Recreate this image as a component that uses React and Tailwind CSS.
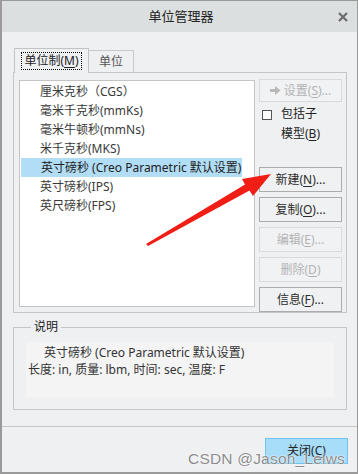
import React from "react";

const F = { fontFamily: '"Noto Sans", "Noto Sans CJK SC", sans-serif' };

function U({ children }) {
  return <span className="underline underline-offset-2 decoration-1">{children}</span>;
}

function Btn({ children, disabled, className = "" }) {
  return (
    <div
      className={
        "h-[25px] w-[83px] flex items-center justify-center border text-[12px] " +
        (disabled
          ? "border-[#dadada] text-[#b3b3b3] bg-[#f1f2f3] "
          : "border-[#acacac] text-[#2b2b2b] bg-[#f0f1f2] ") +
        className
      }
    >
      {children}
    </div>
  );
}

function RowArrow({ color }) {
  return (
    <svg width="11" height="11" viewBox="0 0 11 11">
      <path d="M0 4 H5 V1 L10.5 5.5 L5 10 V7 H0 Z" fill={color} />
    </svg>
  );
}

const items = [
  "厘米克秒（CGS）",
  "毫米千克秒(mmKs)",
  "毫米牛顿秒(mmNs)",
  "米千克秒(MKS)",
  "英寸磅秒 (Creo Parametric 默认设置)",
  "英寸磅秒(IPS)",
  "英尺磅秒(FPS)",
];

export default function App() {
  return (
    <div
      className="relative w-[358px] h-[474px] bg-[#eff0f2] border border-[#9a9a9a] border-l-2 border-b-2 flex flex-col text-[#333]"
      style={F}
    >
      {/* title bar */}
      <div className="h-[31px] bg-[#dcdfe0] flex items-center justify-center relative shrink-0">
        <span className="text-[13px] text-[#222] ml-[3px]">单位管理器</span>
        <svg className="absolute right-[9px] top-[11px]" width="10" height="10" viewBox="0 0 10 10">
          <path d="M1 1 L9 9 M9 1 L1 9" stroke="#6b6b6b" strokeWidth="2.2" />
        </svg>
      </div>

      {/* tabs */}
      <div className="ml-[11px] mt-[16px] flex items-end h-[25px] relative z-10">
        <div className="w-[75px] h-[25px] ml-[1px] border border-b-0 border-[#c3c3c3] bg-[#eff0f2] flex items-center justify-center">
          <div className="border border-dotted border-black px-[2px] h-[18px] flex items-center text-[12px] text-[#222]">
            单位制(<U>M</U>)
          </div>
        </div>
        <div className="w-[45px] h-[23px] border border-l-0 border-b-0 border-[#c9c9c9] flex items-center justify-center text-[12px] text-[#555]">
          单位
        </div>
      </div>

      {/* tab panel */}
      <div className="ml-[11px] -mt-[1px] w-[334px] h-[241px] border border-[#c6c6c6] flex">
        <div className="ml-[5px] mt-[7px] w-[236px] h-[227px] bg-white border border-[#c4c4c4] pt-[1px]">
          {items.map((t, i) => (
            <div key={i} className="h-[19px] flex items-center">
              <div className="w-[20px] flex justify-end pr-[1px]">
                {i === 4 && <RowArrow color="#1e5f8e" />}
              </div>
              <span
                className={
                  "text-[12px] leading-[19px] whitespace-nowrap " +
                  (i === 4 ? "bg-[#b2ddf7] -ml-[19px] pl-[20px] pr-[1px] text-[#222]" : "text-[#3a3a3a]")
                }
              >
                {t}
              </span>
            </div>
          ))}
        </div>
        <div className="ml-[4px] mt-[6px] flex flex-col">
          <Btn disabled>
            <span className="mr-[3px] flex"><RowArrow color="#b8b8b8" /></span>
            设置(<U>S</U>)...
          </Btn>
          <div className="flex mt-[7px] ml-[3px] h-[50px]">
            <div className="w-[10px] h-[10px] border border-[#555] bg-white mt-[1px]" />
            <div className="ml-[9px] text-[12px] leading-[20px] -mt-[5px] text-[#222]">
              包括子
              <br />
              模型(<U>B</U>)
            </div>
          </div>
          <div className="flex flex-col gap-[5px] mt-[12px]">
            <Btn>新建(<U>N</U>)...</Btn>
            <Btn>复制(<U>O</U>)...</Btn>
            <Btn disabled>编辑(<U>E</U>)...</Btn>
            <Btn disabled>删除(<U>D</U>)</Btn>
            <Btn>信息(<U>F</U>)...</Btn>
          </div>
        </div>
      </div>

      {/* description group */}
      <fieldset className="ml-[11px] mt-[6px] w-[334px] h-[91px] border border-[#c6c6c6] px-[12px]">
        <legend className="ml-[5px] px-[3px] text-[12px] text-[#222] leading-[16px]">说明</legend>
        <div className="mt-[7px] w-[308px] h-[55px] bg-[#f4f4f5] text-[12px] leading-[17px] text-[#333] pt-[2px]">
          <div className="pl-[18px]">英寸磅秒 (Creo Parametric 默认设置)</div>
          <div className="pl-[2px]">长度: in, 质量: lbm, 时间: sec, 温度: F</div>
        </div>
      </fieldset>

      {/* separator */}
      <div className="mt-[16px] h-px bg-[#c6c6c6] w-full" />

      {/* footer */}
      <div className="flex justify-end pr-[9px] mt-[11px]">
        <div className="w-[83px] h-[26px] bg-[#a8ddfa] border border-[#6fc3f0] flex items-center justify-center text-[12px] text-[#222]">
          关闭(<U>C</U>)
        </div>
      </div>

      {/* watermark */}
      <div
        className="absolute left-[186px] top-[446px] text-[15.5px] text-[#8c8c8c] whitespace-nowrap tracking-[0.2px]"
        style={{ fontFamily: '"Liberation Sans", Arial, sans-serif', textShadow: "0 0 1px #fff, 0 0 2px #fff" }}
      >
        CSDN @Jason_Leiws
      </div>

      {/* red arrow annotation */}
      <svg className="absolute left-0 top-0 pointer-events-none" width="358" height="474" viewBox="0 0 358 474">
        <polygon points="144,243 243,183.5 240,178 269,173 251,195 247.5,189.5 146,245" fill="#f01e14" />
      </svg>
    </div>
  );
}
